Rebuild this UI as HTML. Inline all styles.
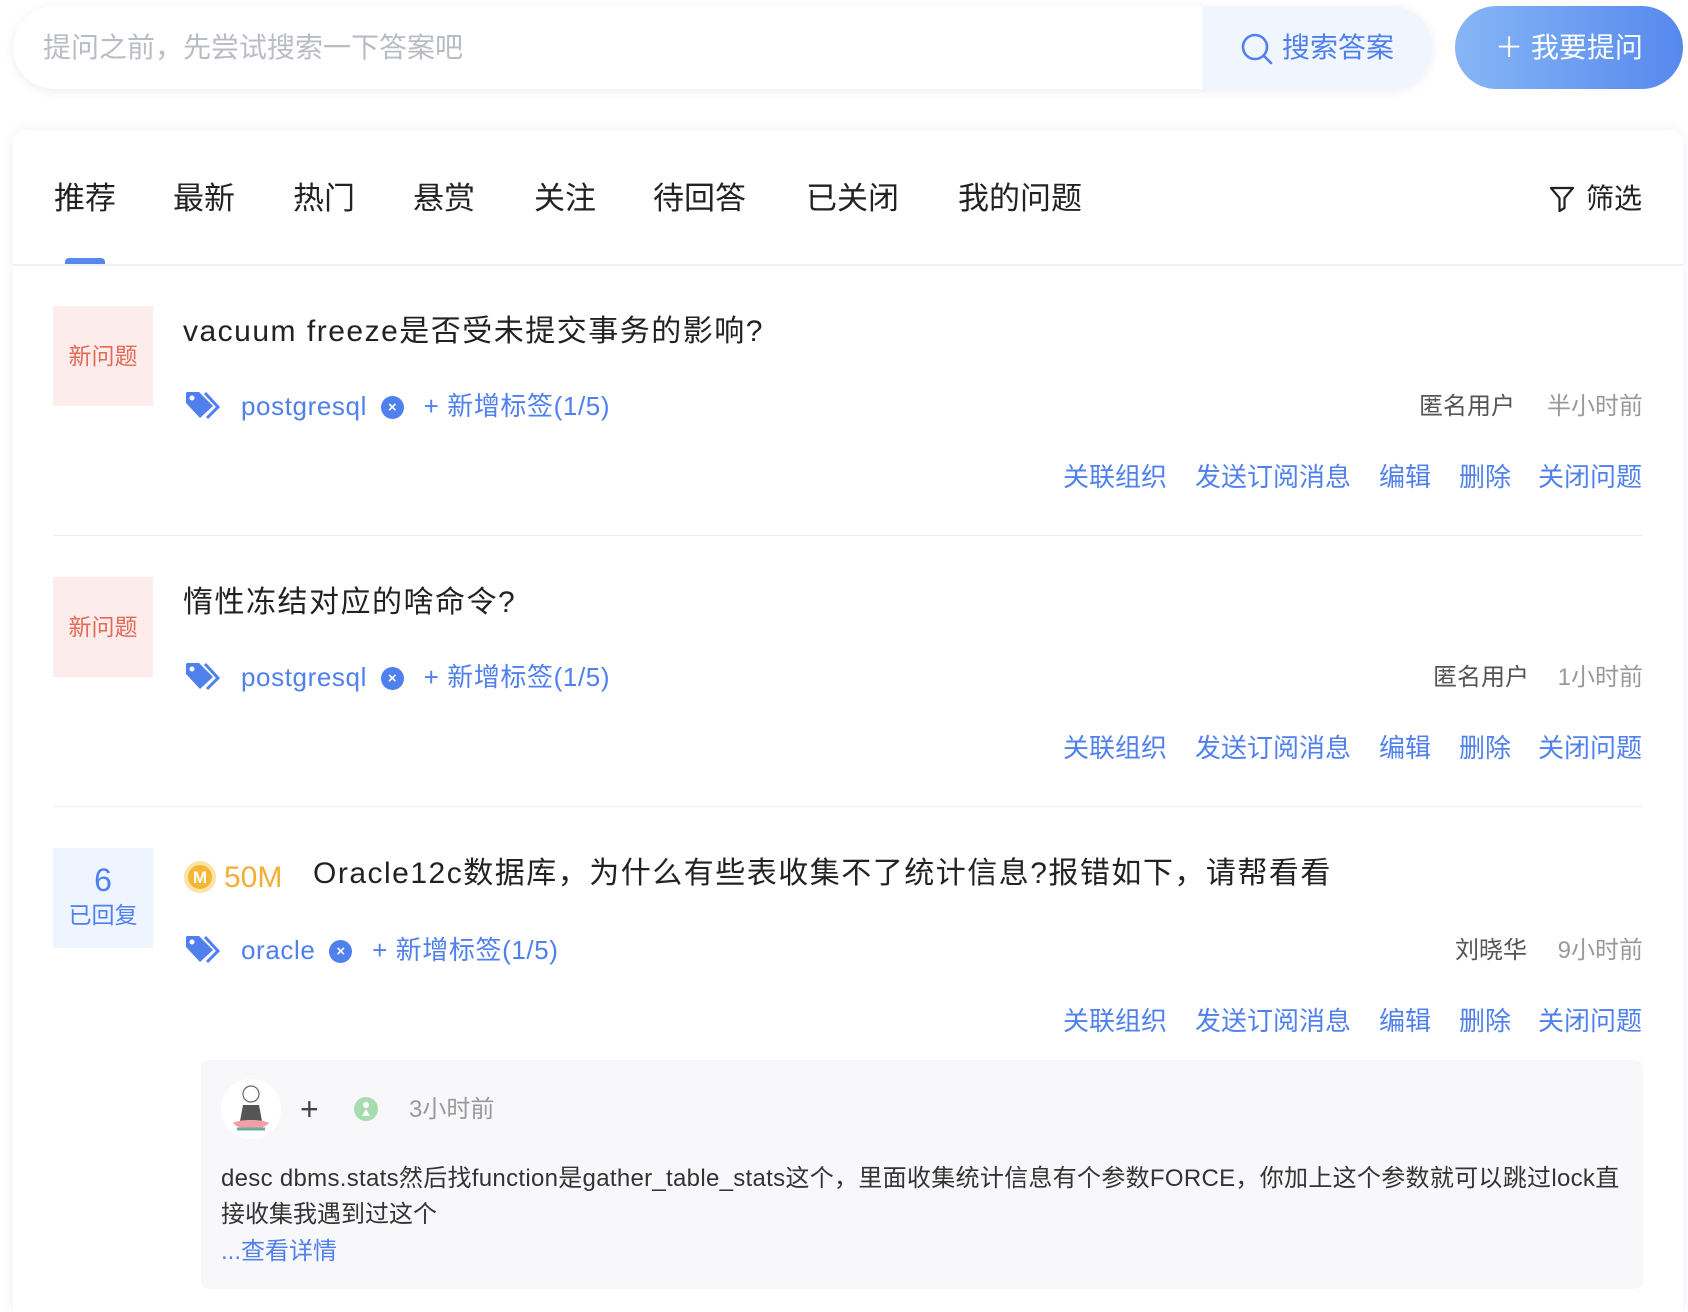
<!DOCTYPE html>
<html><head><meta charset="utf-8"><style>
*{margin:0;padding:0;box-sizing:border-box}
html,body{width:1688px;height:1312px;overflow:hidden}
body{background:#fff;font-family:"Liberation Sans","Noto Sans CJK SC",sans-serif;position:relative;color:#222}
.a{position:absolute;white-space:nowrap}
.blue{color:#4f80ee}
.search{left:13px;top:6px;width:1419px;height:83px;border-radius:42px;background:#fff;box-shadow:0 2px 10px rgba(60,80,140,0.10);overflow:hidden}
.sbtn{position:absolute;right:0;top:0;width:230px;height:83px;background:#f1f5fe}
.ask{left:1455px;top:6px;width:228px;height:83px;border-radius:42px;background:linear-gradient(90deg,#86b6f5,#5689ee);color:#fff;font-size:28px;line-height:83px;text-align:center}
.card{left:13px;top:130px;width:1670px;height:1182px;background:#fff;border-radius:12px 12px 0 0;box-shadow:0 0 12px rgba(60,80,140,0.09)}
.tab{top:178px;font-size:31px;line-height:42px;color:#222}
.badge{width:100px;height:100px;background:#fcecec;color:#e26a55;font-size:23px;text-align:center;line-height:100px}
.title{font-size:30px;line-height:40px;color:#222;letter-spacing:1.5px}
.tag{font-size:26px;line-height:36px;letter-spacing:0.6px}
.meta{font-size:24px;line-height:32px}
.act{font-size:26px;line-height:36px;color:#4f80ee}
.sep{left:53px;width:1590px;height:1px;background:#eceef2}
.x{display:inline-block;width:23px;height:23px;border-radius:50%;background:#4f80ee;color:#fff;font-size:15px;line-height:23px;text-align:center;font-weight:bold;vertical-align:3px;letter-spacing:0}
</style></head><body>
<div class="a search"><div class="a" style="left:30px;top:0;line-height:83px;font-size:28px;color:#b9bcc4">提问之前，先尝试搜索一下答案吧</div>
<div class="sbtn"><svg class="a" style="left:38px;top:26px" width="34" height="34" viewBox="0 0 34 34"><circle cx="15" cy="15" r="12" fill="none" stroke="#4f80ee" stroke-width="2.6"/><path d="M24 24l7 7" stroke="#4f80ee" stroke-width="2.6" stroke-linecap="round"/></svg><div class="a blue" style="left:80px;top:0;line-height:83px;font-size:28px">搜索答案</div></div></div>
<div class="a ask">＋ 我要提问</div>
<div class="a card"></div>
<div class="a tab" style="left:54px">推荐</div>
<div class="a tab" style="left:173px">最新</div>
<div class="a tab" style="left:293px">热门</div>
<div class="a tab" style="left:413px">悬赏</div>
<div class="a tab" style="left:534px">关注</div>
<div class="a tab" style="left:653px">待回答</div>
<div class="a tab" style="left:806px">已关闭</div>
<div class="a tab" style="left:958px">我的问题</div>
<div class="a" style="left:65px;top:258px;width:40px;height:7px;border-radius:4px 4px 0 0;background:#5589ee"></div>
<div class="a" style="left:13px;top:264px;width:1670px;height:2px;background:#eef0f4"></div>
<svg class="a" style="left:1549px;top:185px" width="26" height="28" viewBox="0 0 26 28"><path d="M2 3h22l-8.5 10v10l-5 3V13z" fill="none" stroke="#222" stroke-width="2.2" stroke-linejoin="round"/></svg>
<div class="a" style="left:1586px;top:181px;font-size:28px;line-height:36px">筛选</div>

<!-- item 1 -->
<div class="a badge" style="left:53px;top:306px">新问题</div>
<div class="a title" style="left:183px;top:312px">vacuum freeze是否受未提交事务的影响?</div>
<svg class="a" style="left:184px;top:390px" width="36" height="32" viewBox="0 0 36 32"><path d="M2 3v10l14 15 13-12L15 2H3z" fill="#4f80ee"/><circle cx="8" cy="8" r="2.5" fill="#fff"/><path d="M21 3l13 14-11 11" fill="none" stroke="#4f80ee" stroke-width="3"/></svg>
<div class="a tag blue" style="left:241px;top:388px">postgresql <span class="x" style="margin-left:6px">×</span> <span style="margin-left:12px">+ 新增标签(1/5)</span></div>
<div class="a meta" style="right:173px;top:391px;color:#555">匿名用户</div>
<div class="a meta" style="right:45px;top:391px;color:#999">半小时前</div>
<div class="a act" style="left:1063px;top:459px">关联组织</div><div class="a act" style="left:1195px;top:459px">发送订阅消息</div><div class="a act" style="left:1379px;top:459px">编辑</div><div class="a act" style="left:1459px;top:459px">删除</div><div class="a act" style="left:1538px;top:459px">关闭问题</div>
<div class="a sep" style="top:535px"></div>

<!-- item 2 -->
<div class="a badge" style="left:53px;top:577px">新问题</div>
<div class="a title" style="left:183px;top:583px">惰性冻结对应的啥命令?</div>
<svg class="a" style="left:184px;top:661px" width="36" height="32" viewBox="0 0 36 32"><path d="M2 3v10l14 15 13-12L15 2H3z" fill="#4f80ee"/><circle cx="8" cy="8" r="2.5" fill="#fff"/><path d="M21 3l13 14-11 11" fill="none" stroke="#4f80ee" stroke-width="3"/></svg>
<div class="a tag blue" style="left:241px;top:659px">postgresql <span class="x" style="margin-left:6px">×</span> <span style="margin-left:12px">+ 新增标签(1/5)</span></div>
<div class="a meta" style="right:159px;top:662px;color:#555">匿名用户</div>
<div class="a meta" style="right:45px;top:662px;color:#999">1小时前</div>
<div class="a act" style="left:1063px;top:730px">关联组织</div><div class="a act" style="left:1195px;top:730px">发送订阅消息</div><div class="a act" style="left:1379px;top:730px">编辑</div><div class="a act" style="left:1459px;top:730px">删除</div><div class="a act" style="left:1538px;top:730px">关闭问题</div>
<div class="a sep" style="top:806px"></div>

<!-- item 3 -->
<div class="a" style="left:53px;top:848px;width:100px;height:100px;background:#eef5ff;text-align:center;color:#4f80ee"><div style="font-size:32px;line-height:36px;margin-top:14px">6</div><div style="font-size:23px;line-height:34px">已回复</div></div>
<svg class="a" style="left:183px;top:860px" width="34" height="34" viewBox="0 0 34 34"><circle cx="17" cy="17" r="16" fill="#fbe3a6"/><circle cx="17" cy="17" r="12" fill="#f5b733"/><text x="17" y="23" text-anchor="middle" font-size="17" font-weight="bold" fill="#fff" font-family="Liberation Sans">M</text></svg>
<div class="a" style="left:224px;top:858px;font-size:30px;line-height:40px;color:#f5ae35">50M</div>
<div class="a title" style="left:313px;top:854px">Oracle12c数据库，为什么有些表收集不了统计信息?报错如下，请帮看看</div>
<svg class="a" style="left:184px;top:934px" width="36" height="32" viewBox="0 0 36 32"><path d="M2 3v10l14 15 13-12L15 2H3z" fill="#4f80ee"/><circle cx="8" cy="8" r="2.5" fill="#fff"/><path d="M21 3l13 14-11 11" fill="none" stroke="#4f80ee" stroke-width="3"/></svg>
<div class="a tag blue" style="left:241px;top:932px">oracle <span class="x" style="margin-left:6px">×</span> <span style="margin-left:12px">+ 新增标签(1/5)</span></div>
<div class="a meta" style="right:161px;top:935px;color:#555">刘晓华</div>
<div class="a meta" style="right:45px;top:935px;color:#999">9小时前</div>
<div class="a act" style="left:1063px;top:1003px">关联组织</div><div class="a act" style="left:1195px;top:1003px">发送订阅消息</div><div class="a act" style="left:1379px;top:1003px">编辑</div><div class="a act" style="left:1459px;top:1003px">删除</div><div class="a act" style="left:1538px;top:1003px">关闭问题</div>

<div class="a" style="left:201px;top:1060px;width:1442px;height:229px;background:#f8f8fa;border-radius:8px"></div>
<svg class="a" style="left:221px;top:1079px" width="60" height="60" viewBox="0 0 60 60"><circle cx="30" cy="30" r="30" fill="#fff"/><circle cx="30" cy="15" r="8" fill="#fff" stroke="#666" stroke-width="1.2"/><path d="M22 26h16l3 16H19z" fill="#555"/><path d="M12 44c6 8 30 8 36 0-6-4-30-4-36 0z" fill="#f2a0a8"/><path d="M16 50h28" stroke="#6a9" stroke-width="3"/></svg>
<div class="a" style="left:300px;top:1089px;font-size:32px;line-height:40px;color:#444;font-weight:300">+</div>
<svg class="a" style="left:354px;top:1097px" width="24" height="24" viewBox="0 0 24 24"><circle cx="12" cy="12" r="12" fill="#a6dcb0"/><path d="M12 5a3 3 0 100 6 3 3 0 000-6zM8 19l4-7 4 7z" fill="#fff"/></svg>
<div class="a meta" style="left:409px;top:1094px;color:#999">3小时前</div>
<div class="a" style="left:221px;top:1161px;font-size:24px;line-height:36px;color:#333;letter-spacing:0.3px">desc dbms.stats然后找function是gather_table_stats这个，里面收集统计信息有个参数FORCE，你加上这个参数就可以跳过lock直</div>
<div class="a" style="left:221px;top:1197px;font-size:24px;line-height:36px;color:#333">接收集我遇到过这个</div>
<div class="a blue" style="left:221px;top:1234px;font-size:24px;line-height:36px">...查看详情</div>
</body></html>
